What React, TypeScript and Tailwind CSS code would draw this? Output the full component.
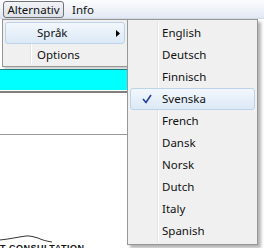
import React from "react";

const font = { fontFamily: '"Noto Sans", "Open Sans", sans-serif' };

function Check() {
  return (
    <svg width="10" height="10" viewBox="0 0 10 10">
      <path d="M1 5 L4 8.5 L9 1" fill="none" stroke="#21409a" strokeWidth="1.6" />
    </svg>
  );
}

function Item({ label, active, arrow }: { label: string; active?: boolean; arrow?: boolean }) {
  return (
    <div
      className={
        "h-[22px] flex items-center rounded-[3px] border " +
        (active ? "border-[#bcd3ea] bg-gradient-to-b from-[#f2f7fc] to-[#dce9f6]" : "border-transparent")
      }
    >
      <div className="w-[31px] flex justify-center">{active && !arrow ? <Check /> : null}</div>
      <span className="flex-1 leading-none">{label}</span>
      {arrow ? (
        <svg className="mr-[4px]" width="4" height="7" viewBox="0 0 4 7">
          <path d="M0 0 L4 3.5 L0 7 Z" fill="#000" />
        </svg>
      ) : null}
    </div>
  );
}

export default function App() {
  const langs = ["English", "Deutsch", "Finnisch", "Svenska", "French", "Dansk", "Norsk", "Dutch", "Italy", "Spanish"];
  return (
    <div className="relative w-[264px] h-[248px] overflow-hidden bg-white text-[11.5px] text-[#111]" style={font}>
      {/* menu bar */}
      <div className="h-[19px] flex items-center gap-[8px] pl-[3px] bg-gradient-to-b from-[#fbfcfe] to-[#e3e9f4] border-b border-[#d4dbe8]">
        <div className="h-[17px] w-[61px] mt-[1px] rounded-[3px] border border-[#6f7276] bg-gradient-to-b from-[#f1f3f6] to-[#dde2e9] flex items-center justify-center leading-none">
          Alternativ
        </div>
        <div className="leading-none mt-[1px]">Info</div>
      </div>
      {/* page content */}
      <div className="flex flex-col w-[127px]">
        <div className="h-[50px]" />
        <div className="h-[1px] bg-[#1d8a8a]" />
        <div className="h-[20px] bg-[#00ffff]" />
        <div className="h-[1px] bg-white" />
        <div className="h-[2px] bg-[#7f7f7f]" />
        <div className="h-[41px]" />
        <div className="h-[1px] bg-[#9a9a9a]" />
        <div className="h-[99px]" />
        <svg width="60" height="10" viewBox="0 0 60 10">
          <path d="M0 6 C10 5 18 3 26 2 C30 1.5 34 3 38 4 C42 6 46 7 52 8" fill="none" stroke="#000" strokeWidth="0.8" />
        </svg>
        <div className="text-[9px] font-bold leading-none tracking-[0.5px] whitespace-nowrap" style={{ fontFamily: '"Liberation Sans", sans-serif' }}>
          T CONSULTATION
        </div>
      </div>

      {/* first dropdown */}
      <div className="absolute left-[2px] top-[19px] w-[126px] h-[48px] border border-[#979797] bg-[#f0f0f0] shadow-[2px_2px_2px_rgba(0,0,0,0.2)] p-[2px]">
        <div className="absolute left-[27px] top-[2px] bottom-[2px] w-[2px] border-l border-[#e2e3e3] border-r border-r-white" />
        <div className="relative flex flex-col">
          <Item label="Språk" active arrow />
          <Item label="Options" />
        </div>
      </div>

      {/* submenu */}
      <div className="absolute left-[127px] top-[19px] w-[131px] h-[226px] border border-[#979797] bg-[#f0f0f0] shadow-[3px_3px_3px_rgba(0,0,0,0.3)] p-[2px]">
        <div className="absolute left-[29px] top-[2px] bottom-[2px] w-[2px] border-l border-[#e2e3e3] border-r border-r-white" />
        <div className="relative flex flex-col">
          {langs.map((l) => (
            <Item key={l} label={l} active={l === "Svenska"} />
          ))}
        </div>
      </div>
    </div>
  );
}
